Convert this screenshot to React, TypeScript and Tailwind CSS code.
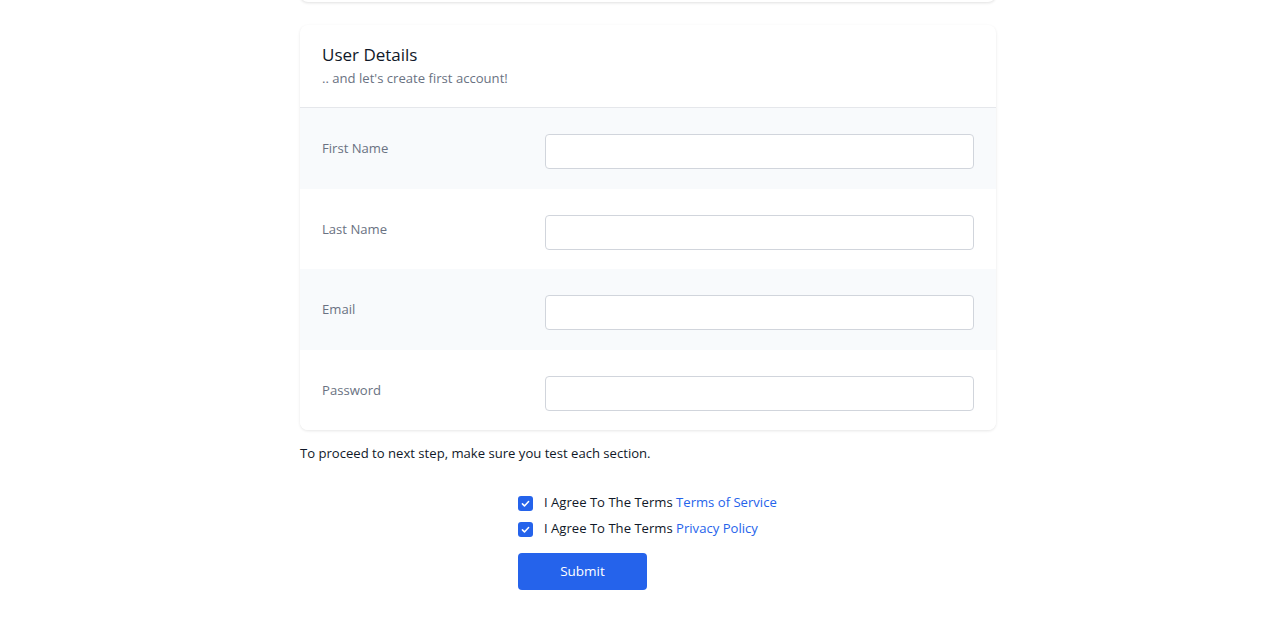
import React from "react";

const fields = ["First Name", "Last Name", "Email", "Password"];

const CheckIcon: React.FC = () => (
    <svg viewBox="0 0 16 16" className="w-[11px] h-[11px]" fill="none">
        <path d="M3.5 8.5l3 3 6-6.5" stroke="white" strokeWidth="2.2" strokeLinecap="round" strokeLinejoin="round"/>
    </svg>
);

const AgreeRow: React.FC<{ link: string }> = ({link}) => (
    <label className="flex items-center gap-[11px] h-[26px] text-[13.1px] text-gray-900">
        <span className="w-[15px] h-[15px] rounded-[3px] bg-[#2563eb] flex items-center justify-center">
            <CheckIcon/>
        </span>
        <span>
            I Agree To The Terms <a className="text-[#2563eb]">{link}</a>
        </span>
    </label>
);

export default function App() {
    return (
        <div className="min-h-screen bg-white font-['Open_Sans',sans-serif] overflow-hidden">
            <div className="ml-[300px] w-[696px]">
                {/* previous card, only its bottom edge shows */}
                <div className="-mt-[40px] h-[42px] bg-white rounded-lg shadow-[0_1px_3px_rgba(0,0,0,0.12)]"/>

                <div className="mt-[23px] bg-white rounded-lg shadow-[0_1px_3px_rgba(0,0,0,0.1)] overflow-hidden">
                    <div className="px-[22px] pt-4 pb-[19px] border-b border-gray-200">
                        <h3 className="text-[17px] leading-7 text-gray-900">User Details</h3>
                        <p className="-mt-px text-[13.1px] leading-5 text-gray-500">.. and let's create first account!</p>
                    </div>
                    {fields.map((f, i) => (
                        <div key={f}
                             className={`grid grid-cols-3 gap-4 px-[22px] pt-[26px] pb-[19.5px] ${i % 2 === 0 ? "bg-[#f8fafc]" : "bg-white"}`}>
                            <div className="text-[13.1px] leading-5 text-gray-500 mt-[4px]">{f}</div>
                            <input
                                type={f === "Password" ? "password" : "text"}
                                className="col-span-2 h-[35px] rounded border border-gray-300 bg-white px-3 text-sm outline-none"
                            />
                        </div>
                    ))}
                </div>

                <p className="mt-[13px] text-[13.1px] leading-5 text-gray-900">
                    To proceed to next step, make sure you test each section.
                </p>

                <div className="ml-[218px] mt-[27px]">
                    <AgreeRow link="Terms of Service"/>
                    <AgreeRow link="Privacy Policy"/>
                    <button className="mt-[11px] w-[129px] h-[37px] rounded bg-[#2563eb] text-white text-[13.5px]">
                        Submit
                    </button>
                </div>
            </div>
        </div>
    );
}
